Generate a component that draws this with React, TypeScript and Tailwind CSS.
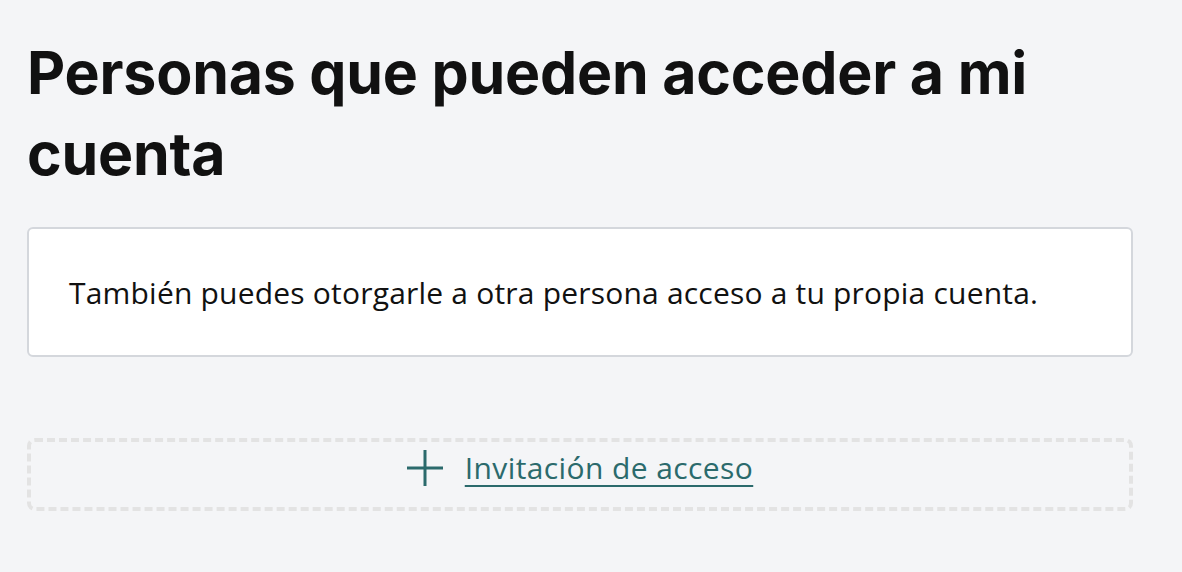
export default function App() {
  return (
    <div className="min-h-[572px] w-full bg-[#f4f5f7] px-[27px] pt-[32px] font-['Inter',sans-serif] text-[#111111]">
      <div className="w-[1106px]">
        <h1 className="text-[59px] font-bold leading-[81px] tracking-[-0.2px]">
          Personas que pueden acceder a mi cuenta
        </h1>
        <div className="mt-[33px] flex h-[130px] items-center rounded-[6px] border-2 border-[#d4d7dc] bg-white px-[40px]">
          <p className="font-['Open_Sans',sans-serif] text-[30px] tracking-[0.2px] text-[#111111]">
            También puedes otorgarle a otra persona acceso a tu propia cuenta.
          </p>
        </div>
        <div className="mt-[81px] flex h-[73px] items-center justify-center gap-[22px] rounded-[8px] border-[4px] border-dashed border-[#e3e3e3] pb-[14px]">
          <svg width="36" height="36" viewBox="0 0 36 36" className="text-[#2b6a6c]" aria-hidden="true">
            <path d="M18 0v36M0 18h36" stroke="currentColor" strokeWidth="3" fill="none" />
          </svg>
          <a href="#" className="font-['Open_Sans',sans-serif] text-[30px] tracking-[0.4px] text-[#2b6a6c] underline decoration-2 underline-offset-[6px]">
            Invitación de acceso
          </a>
        </div>
      </div>
    </div>
  );
}
